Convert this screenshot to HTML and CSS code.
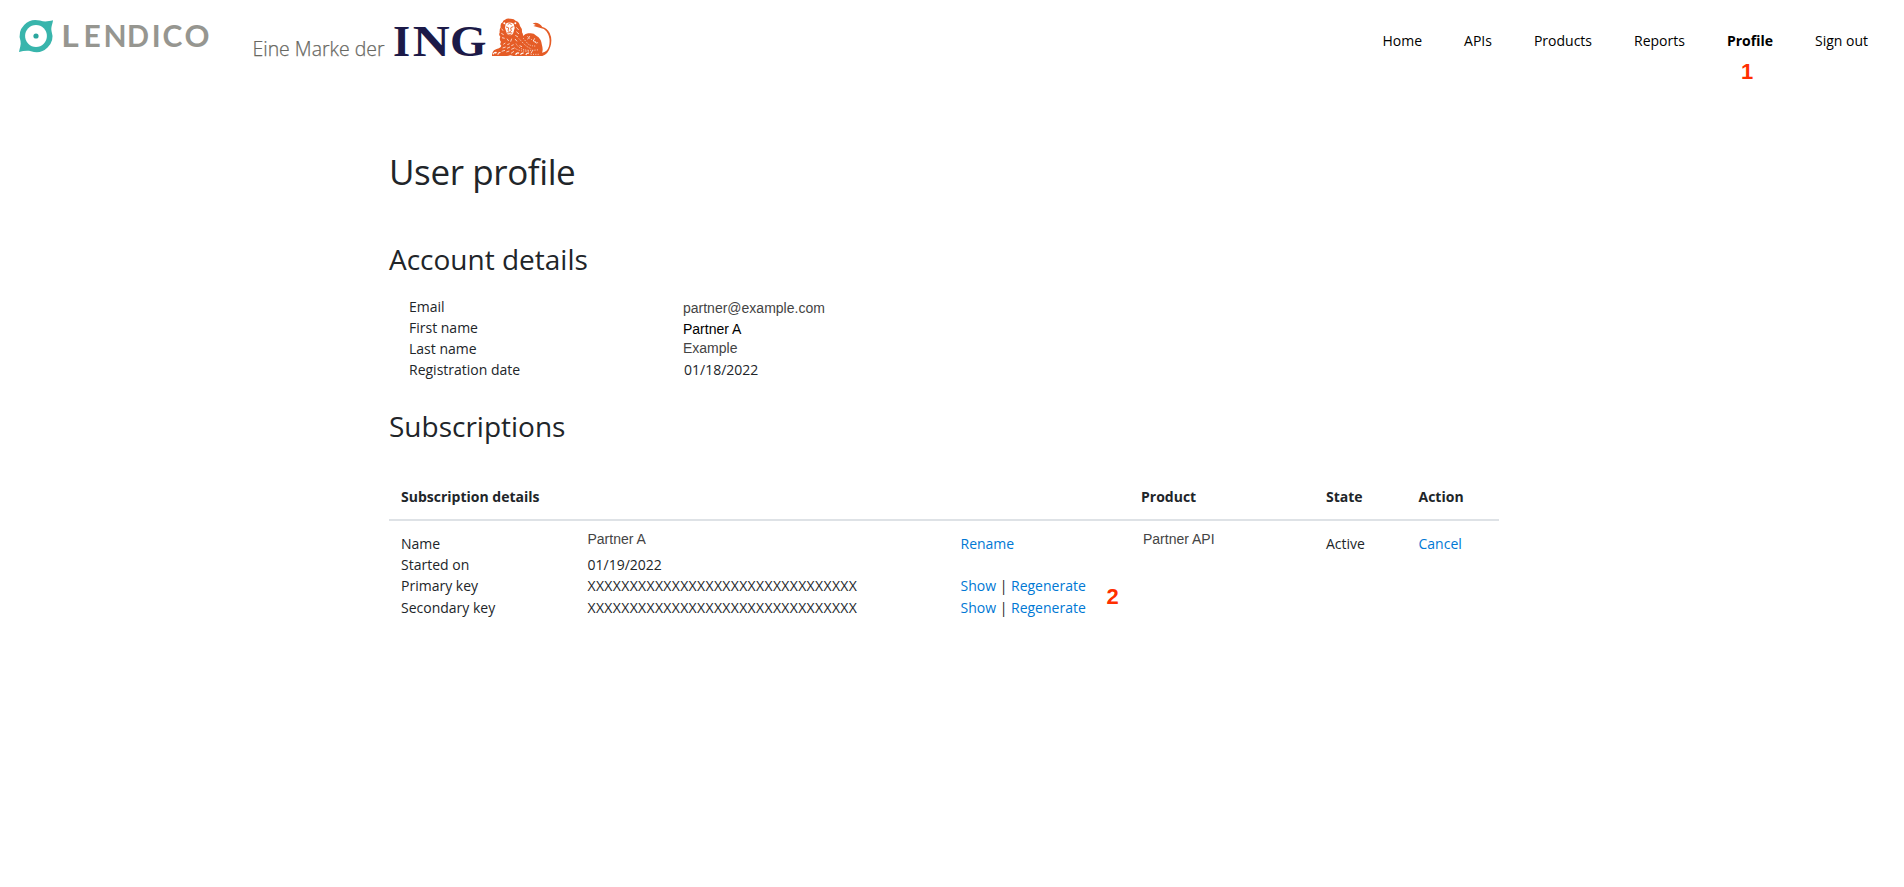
FILE: index.html
```html
<!DOCTYPE html>
<html lang="en">
<head>
<meta charset="utf-8">
<title>User profile</title>
<link rel="stylesheet" href="styles.css">
</head>
<body>
<header class="header">
  <svg class="logo" width="560" height="80" viewBox="0 0 560 80" role="img" aria-label="Lendico, eine Marke der ING">
    <path fill="#38b5ac" d="M53 20.300C52.600 24.500 50.800 26.500 51.500 31A16 16 0 0 1 31 51.200C27 50.400 23 51 19 52C19.800 47.500 21.300 45 20.500 41A16 16 0 0 1 40 20.600C45 22.200 48.500 21.300 53 20.300Z"/>
    <circle cx="36" cy="36" r="10.900" fill="#fff"/>
    <circle cx="36" cy="36" r="2.600" fill="#2aa69e"/>
    <g class="wordmark">
      <text x="61.300" y="46.700" textLength="17.500" lengthAdjust="spacingAndGlyphs">L</text>
      <text x="83.500" y="46.700">E</text>
      <text x="103.500" y="46.700">N</text>
      <text x="127" y="46.700" textLength="22" lengthAdjust="spacingAndGlyphs">D</text>
      <text x="151.700" y="46.700">I</text>
      <text x="162.500" y="46.700">C</text>
      <text x="184.500" y="46.700" textLength="25" lengthAdjust="spacingAndGlyphs">O</text>
    </g>
    <text class="claim" x="252.500" y="56" textLength="132" lengthAdjust="spacingAndGlyphs">Eine Marke der</text>
    <g class="ing">
      <text x="393" y="55.700">I</text>
      <text x="412.800" y="55.700" textLength="37" lengthAdjust="spacingAndGlyphs">N</text>
      <text x="450" y="55.700" textLength="36.500" lengthAdjust="spacingAndGlyphs">G</text>
    </g>
    <g transform="translate(480 8) scale(.33333)">
      <path fill="#e55c26" d="M75 35Q82 30 90 32Q101 31 108 39Q117 41 120 54Q127 62 126 73Q130 78 129 84Q138 74 148 76Q160 74 169 83Q184 91 186 112Q190 126 186 134Q202 132 207 115Q213 89 199 70Q192 61 184 61L171 57Q166 55 160 54L167 51L158 46Q168 42 177 47Q184 51 187 57Q201 60 209 75Q218 94 211 116Q204 139 187 144H100L91 142L81 144H36Q35 133 42 127Q50 122 57 121Q62 118 64 113Q58 109 63 102Q57 95 61 86Q55 80 59 74Q58 64 62 58Q60 46 68 43Q68 37 75 35Z"/>
      <g fill="#fff">
        <path d="M77 47Q88 40 101 47L104 60L99 77Q90 87 81 77L75 60Z"/>
        <circle cx="73" cy="46" r="3"/><circle cx="106" cy="46" r="3"/>
        <path d="M38 137Q44 129 51 132L48 137Q43 134 41 140ZM52 139Q57 129 63 133L59 136Q54 136 55 142ZM105 139Q111 130 118 134L116 137Q109 135 109 142ZM120 139Q125 131 132 134L129 138Q123 136 124 142ZM136 140Q140 132 148 134L145 138Q139 136 140 142Z"/>
      </g>
      <g fill="none" stroke="#e55c26" stroke-width="2.700">
        <path d="M78 57L86 59M92 59L100 56M86 60L84 68L89 72L94 68L92 60M81 75L89 74L97 75M85 80H94M83 50L88 46L95 50"/>
      </g>
      <g fill="none" stroke="#fff" stroke-width="2.200">
        <path d="M65 62L69 68M64 76L71 80M66 89L74 91M109 58L116 66M109 71L117 78M106 82L114 87M81 92L86 99M95 92L92 101M105 93L111 100"/>
        <path d="M70 109L76 105M68 120L77 117M65 130L75 127M82 110L89 107M81 121L90 117M79 132L88 129M94 113L101 110M94 124L103 120M93 136L102 130"/>
        <path stroke-dasharray="3 4" d="M117 92L130 106Q142 118 155 123M130 91L144 108Q154 115 170 114M142 85Q155 97 175 105M108 107Q116 121 133 125Q148 129 177 125M104 120Q119 132 151 129M152 139H180"/>
        <path d="M164 91L160 99L171 106M149 84L143 94M119 113L126 116M158 127L153 136"/>
      </g>
    </g>
  </svg>
  <nav class="nav">
    <a href="#">Home</a>
    <a href="#">APIs</a>
    <a href="#">Products</a>
    <a href="#">Reports</a>
    <a href="#" class="active">Profile<span class="mark mark-nav">1</span></a>
    <a href="#">Sign out</a>
  </nav>
</header>
<main class="container">
  <h1>User profile</h1>
  <h2>Account details</h2>
  <dl class="account">
    <dt>Email</dt><dd class="sans soft email">partner@example.com</dd>
    <dt>First name</dt><dd class="sans first">Partner A</dd>
    <dt>Last name</dt><dd class="sans soft last">Example</dd>
    <dt>Registration date</dt><dd>01/18/2022</dd>
  </dl>
  <h2 class="subs-title">Subscriptions</h2>
  <section class="table">
    <div class="row head">
      <div>Subscription details</div><div>Product</div><div>State</div><div>Action</div>
    </div>
    <div class="row body">
      <div class="details">
        <span>Name</span><span class="sans soft value">Partner A</span><span><a href="#">Rename</a></span>
        <span>Started on</span><span>01/19/2022</span><span></span>
        <span>Primary key</span><span class="key">XXXXXXXXXXXXXXXXXXXXXXXXXXXXXXXX</span><span><a href="#">Show</a> | <a href="#">Regenerate</a></span>
        <span>Secondary key</span><span class="key">XXXXXXXXXXXXXXXXXXXXXXXXXXXXXXXX</span><span class="last-links"><a href="#">Show</a> | <a href="#">Regenerate</a><span class="mark mark-keys">2</span></span>
      </div>
      <div class="sans soft product">Partner API</div>
      <div>Active</div>
      <div><a href="#">Cancel</a></div>
    </div>
  </section>
</main>
</body>
</html>
```
FILE: styles.css
```css
* { box-sizing: border-box; }
body {
  margin: 0;
  background: #fff;
  color: #212529;
  font: 14px/21px "Open Sans", sans-serif;
}
a { color: #0078d4; text-decoration: none; }

.header {
  display: flex;
  justify-content: space-between;
  height: 80px;
  padding-right: 36px;
}
.logo { display: block; }
.wordmark { font: 700 30px Lato, sans-serif; fill: #969690; }
.claim { font: 300 20px "Open Sans", sans-serif; fill: #686862; stroke: #686862; stroke-width: .25px; }
.ing { font: 700 44px "Liberation Serif", serif; fill: #1c1a48; }

.nav { display: flex; gap: 42px; padding-top: 30px; }
.nav a { color: #000; position: relative; height: 21px; }
.nav .active { font-weight: 700; }
.mark {
  position: absolute;
  color: #ff2f00;
  font: 700 22px/24px "Liberation Sans", sans-serif;
}
.mark-nav { left: 14px; top: 30px; }
.mark-keys { left: 146px; top: -11px; }

.container { width: 1110px; margin: 0 auto 0 389px; padding-top: 71px; }
h1, h2 { margin: 0; font-weight: 400; }
h1 { font-size: 35px; line-height: 42px; letter-spacing: -.4px; }
h2 { font-size: 28px; line-height: 34px; margin-top: 49px; }
.account {
  display: grid;
  grid-template-columns: 275px 1fr;
  margin: 20px 0 0 20px;
}
.account dd { margin: 0; }
.sans { font-family: "Liberation Sans", sans-serif; }
.soft { color: #444; }
.account .email, .account .first, .account .last { height: 21px; margin-left: -1px; }
.email { padding-top: 2px; }
.first { color: #000; padding-top: 2px; }
.last { line-height: 20px; }
.subs-title { margin-top: 29px; }

.table { margin-top: 31px; }
.row { display: grid; grid-template-columns: 740px 185px 92.5px 92.5px; }
.row > div { padding: 12px; }
.head { font-weight: 700; border-bottom: 2px solid #dee2e6; height: 47px; }
.details {
  display: grid;
  grid-template-columns: 186.5px 373px 1fr;
  grid-template-rows: 21px 21px 21px 22px;
  white-space: nowrap;
}
.details > span:nth-last-child(-n+3) { padding-top: 1px; }
.key { letter-spacing: .34px; }
.value { line-height: 13px; }
.row .product { line-height: 13px; padding-left: 14px; }
.last-links { position: relative; }
```
